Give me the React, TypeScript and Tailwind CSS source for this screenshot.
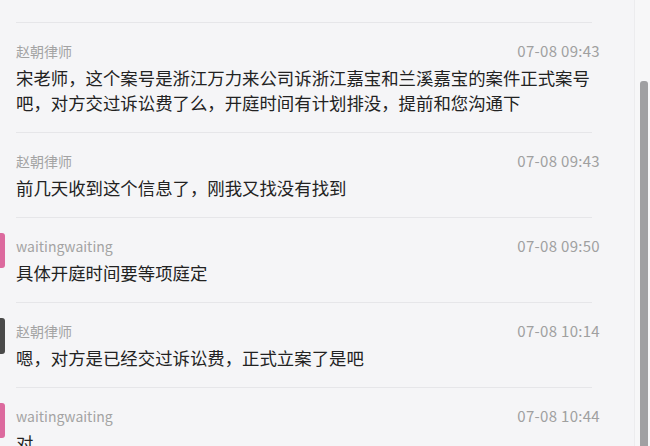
import React from "react";

type Msg = { name: string; time: string; text: string; avatar?: string };

const msgs: Msg[] = [
  {
    name: "赵朝律师",
    time: "07-08 09:43",
    text: "宋老师，这个案号是浙江万力来公司诉浙江嘉宝和兰溪嘉宝的案件正式案号吧，对方交过诉讼费了么，开庭时间有计划排没，提前和您沟通下",
  },
  { name: "赵朝律师", time: "07-08 09:43", text: "前几天收到这个信息了，刚我又找没有找到" },
  { name: "waitingwaiting", time: "07-08 09:50", text: "具体开庭时间要等项庭定", avatar: "pink" },
  { name: "赵朝律师", time: "07-08 10:14", text: "嗯，对方是已经交过诉讼费，正式立案了是吧", avatar: "dark" },
  { name: "waitingwaiting", time: "07-08 10:44", text: "对", avatar: "pink" },
];

function Row({ m }: { m: Msg }) {
  return (
    <div className="flex">
      <div className="w-[5px] shrink-0 pt-[16px]">
        {m.avatar === "pink" && <div className="h-[35px] w-[5px] rounded-r-[3px] bg-[#dc6a9e]" />}
        {m.avatar === "dark" && <div className="h-[36px] w-[5px] rounded-r-[3px] bg-[#4a4a4a]" />}
      </div>
      <div className="ml-[11px] flex-1">
        <div className="mr-[8px] h-px bg-[#e6e6e9]" />
        <div className="pt-[18px] pb-[17px]">
          <div className="flex h-[20px] items-center justify-between">
            <span className="text-[14px] text-[#a3a3a3]">{m.name}</span>
            <span className="text-[15px] tracking-[0.3px] text-[#a0a0a0]">{m.time}</span>
          </div>
          <div className="mt-[4px] text-[17.4px] leading-[25px] text-[#222]">{m.text}</div>
        </div>
      </div>
    </div>
  );
}

export default function App() {
  return (
    <div
      className="flex h-[446px] w-[650px] overflow-hidden bg-[#f5f5f7]"
      style={{ fontFamily: '"Noto Sans CJK SC", "Noto Sans", sans-serif' }}
    >
      <div className="w-[600px] shrink-0 pt-[22px]">
        {msgs.map((m, i) => (
          <Row key={i} m={m} />
        ))}
      </div>
      <div className="ml-[34px] flex w-[16px] border-l border-[#ececee] bg-[#f7f7f8] pl-[5px]">
        <div className="mt-[81px] h-[400px] w-[8px] rounded-t-[3px] bg-[#a0a0a2]" />
      </div>
    </div>
  );
}
